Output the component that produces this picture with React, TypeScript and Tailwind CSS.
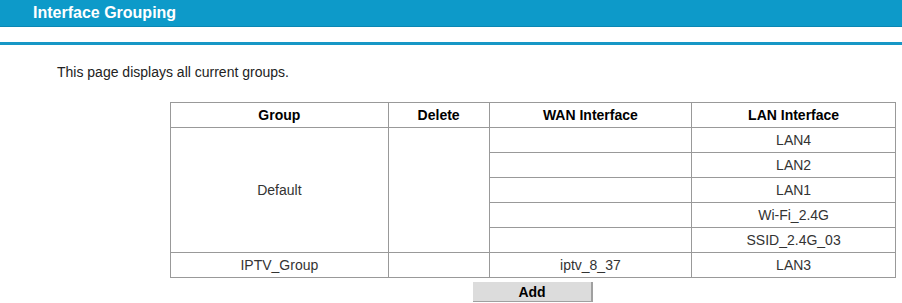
import React from "react";

const lanRows = ["LAN4", "LAN2", "LAN1", "Wi-Fi_2.4G", "SSID_2.4G_03"];

export default function App() {
  const td = "border border-[#999] text-center h-[25px] p-0 text-[14px] text-[#333]";
  const th = "border border-[#999] text-center h-[25px] p-0 text-[14px] font-bold text-black";
  return (
    <div className="w-[902px] h-[303px] bg-white overflow-hidden" style={{ fontFamily: '"Liberation Sans", Arial, sans-serif' }}>
      <div className="h-[27px] bg-[#0d9ac9] border-b border-[#0a87b3] flex items-center pl-[33px]">
        <span className="text-white font-bold text-[16px] leading-none">Interface Grouping</span>
      </div>
      <div className="mt-[15px] h-[3px] bg-[#1797c6]" />
      <div className="pl-[57px] mt-[19px] text-[14px] text-[#222] leading-[16px]">This page displays all current groups.</div>
      <div className="pl-[170px] mt-[22px]">
        <table className="border-collapse w-[726px]">
          <colgroup>
            <col className="w-[218px]" />
            <col className="w-[101px]" />
            <col className="w-[203px]" />
            <col className="w-[204px]" />
          </colgroup>
          <thead>
            <tr>
              <th className={th}>Group</th>
              <th className={th}>Delete</th>
              <th className={th}>WAN Interface</th>
              <th className={th}>LAN Interface</th>
            </tr>
          </thead>
          <tbody>
            {lanRows.map((lan, i) => (
              <tr key={lan}>
                {i === 0 && (
                  <>
                    <td className={td} rowSpan={5}>Default</td>
                    <td className={td} rowSpan={5}></td>
                  </>
                )}
                <td className={td}></td>
                <td className={td}>{lan}</td>
              </tr>
            ))}
            <tr>
              <td className={td}>IPTV_Group</td>
              <td className={td}></td>
              <td className={td}>iptv_8_37</td>
              <td className={td}>LAN3</td>
            </tr>
          </tbody>
        </table>
        <div className="w-[726px] flex justify-center mt-[4px]">
          <button className="w-[120px] h-[20px] bg-[#dcdcdc] border-r-2 border-b border-[#a0a0a0] text-[14px] font-bold text-black leading-none">
            Add
          </button>
        </div>
      </div>
    </div>
  );
}
